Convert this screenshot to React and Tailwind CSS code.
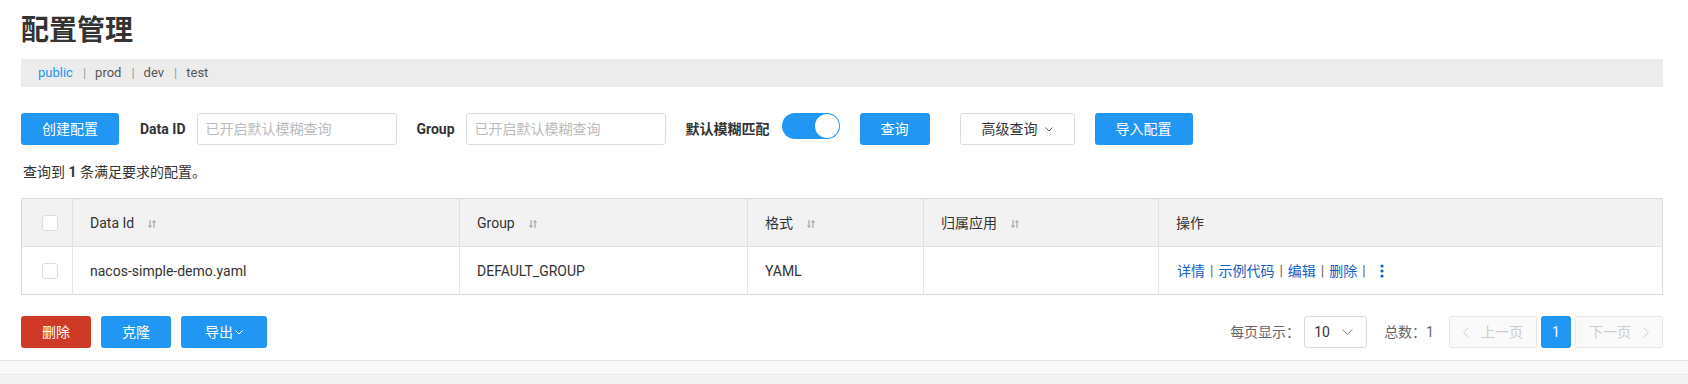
import React from "react";

const SortIcon = () => (
  <svg width="8" height="10" viewBox="0 0 8 10" className="ml-[14px] inline-block">
    <path d="M2 1v7M0.5 6.5L2 8.5 3.5 6.5" stroke="#999" strokeWidth="1" fill="none" />
    <path d="M6 9V2M4.5 3.5L6 1.5 7.5 3.5" stroke="#999" strokeWidth="1" fill="none" />
  </svg>
);

const Chevron = ({ className = "" }) => (
  <svg width="8" height="5" viewBox="0 0 8 5" className={className}>
    <path d="M0.5 0.5L4 4 7.5 0.5" stroke="currentColor" strokeWidth="1" fill="none" />
  </svg>
);

const Checkbox = () => (
  <span className="block w-4 h-4 rounded-[3px] border border-[#dcdcdc] bg-white" />
);

const BlueButton = ({ children, className = "" }) => (
  <button className={`h-8 px-[21px] rounded-[3px] bg-[#2196f3] text-white text-sm flex items-center ${className}`}>
    {children}
  </button>
);

const Input = () => (
  <input
    placeholder="已开启默认模糊查询"
    className="w-[200px] h-8 px-2 rounded-[3px] border border-[#dcdcdc] text-sm outline-none placeholder:text-[#bbb]"
  />
);

const columns = [
  { key: "dataId", label: "Data Id", width: "w-[387px]", sort: true },
  { key: "group", label: "Group", width: "w-[288px]", sort: true },
  { key: "type", label: "格式", width: "w-[176px]", sort: true },
  { key: "app", label: "归属应用", width: "w-[235px]", sort: true },
];

const row = {
  dataId: "nacos-simple-demo.yaml",
  group: "DEFAULT_GROUP",
  type: "YAML",
  app: "",
};

const actions = ["详情", "示例代码", "编辑", "删除"];

export default function App() {
  return (
    <div className="w-[1688px] h-[384px] bg-white text-[#333] font-[Roboto,'Noto_Sans_CJK_SC',sans-serif] flex flex-col overflow-hidden">
      <div className="pl-[21px] pr-[25px] flex flex-col">
        {/* Title */}
        <h1 className="pt-[11px] h-[51px] leading-[40px] text-[28px] font-bold text-[#333]">配置管理</h1>

        {/* Namespace bar */}
        <div className="mt-2 h-[28px] bg-[#ececec] pl-[17px] flex items-center text-[13px] text-[#555]">
          <span className="text-[#2196f3]">public</span>
          {["prod", "dev", "test"].map((ns) => (
            <React.Fragment key={ns}>
              <span className="ml-[10px] mr-[9px] text-[#999]">|</span>
              <span>{ns}</span>
            </React.Fragment>
          ))}
        </div>

        {/* Search bar */}
        <div className="mt-[26px] h-8 flex items-center text-sm">
          <BlueButton>创建配置</BlueButton>
          <span className="ml-[21px] mr-[11px] font-bold">Data ID</span>
          <Input />
          <span className="ml-[20px] mr-[11px] font-bold">Group</span>
          <Input />
          <span className="ml-[20px] mr-[12px] font-bold">默认模糊匹配</span>
          <span className="relative w-[58px] h-[26px] rounded-full bg-[#2196f3] self-start">
            <span className="absolute right-[1px] top-[1px] w-6 h-6 rounded-full bg-white" />
          </span>
          <BlueButton className="ml-5">查询</BlueButton>
          <button className="ml-[30px] h-8 w-[115px] pl-[21px] rounded-[3px] border border-[#dcdcdc] bg-white text-sm flex items-center">
            高级查询
            <Chevron className="ml-[7px] text-[#666]" />
          </button>
          <BlueButton className="ml-5">导入配置</BlueButton>
        </div>

        {/* Result count */}
        <p className="mt-[17px] h-5 leading-5 pl-[2px] text-sm">
          查询到 <strong>1</strong> 条满足要求的配置。
        </p>

        {/* Table */}
        <table className="mt-4 w-full border border-[#dcdcdc] border-collapse text-sm">
          <thead>
            <tr className="h-[48px] bg-[#f2f2f2]">
              <th className="w-[51px] pl-5 border-r border-[#e0e0e0] font-normal text-left">
                <Checkbox />
              </th>
              {columns.map((col) => (
                <th key={col.key} className={`${col.width} pl-[17px] border-r border-[#e0e0e0] font-normal text-left`}>
                  {col.label}
                  {col.sort && <SortIcon />}
                </th>
              ))}
              <th className="pl-[17px] font-normal text-left">操作</th>
            </tr>
          </thead>
          <tbody>
            <tr className="h-[48px] border-t border-[#e0e0e0]">
              <td className="pl-5 border-r border-[#e6e6e6]">
                <Checkbox />
              </td>
              {columns.map((col) => (
                <td key={col.key} className="pl-[17px] border-r border-[#e6e6e6]">
                  {row[col.key]}
                </td>
              ))}
              <td className="pl-[18px]">
                <span className="flex items-center text-[#0f62c4]">
                  {actions.map((a) => (
                    <React.Fragment key={a}>
                      <a>{a}</a>
                      <span className="mx-[5px] text-[#666]">|</span>
                    </React.Fragment>
                  ))}
                  <svg width="4" height="14" viewBox="0 0 4 14" className="ml-[9px]">
                    <circle cx="2" cy="2" r="1.6" fill="#0f62c4" />
                    <circle cx="2" cy="7" r="1.6" fill="#0f62c4" />
                    <circle cx="2" cy="12" r="1.6" fill="#0f62c4" />
                  </svg>
                </span>
              </td>
            </tr>
          </tbody>
        </table>

        {/* Footer actions + pagination */}
        <div className="mt-[21px] h-8 flex items-center justify-between text-sm">
          <div className="flex items-center gap-[10px]">
            <button className="h-8 w-[70px] rounded-[3px] bg-[#cf3a26] text-white">删除</button>
            <button className="h-8 w-[70px] rounded-[3px] bg-[#2196f3] text-white">克隆</button>
            <button className="h-8 w-[86px] rounded-[3px] bg-[#2196f3] text-white flex items-center justify-center">
              导出
              <Chevron className="ml-[2px] text-white" />
            </button>
          </div>
          <div className="flex items-center text-[#666]">
            <span>每页显示：</span>
            <span className="ml-1 h-8 w-[63px] pl-[9px] pr-[13px] rounded-[3px] border border-[#dcdcdc] flex items-center justify-between text-[#333]">
              10
              <svg width="11" height="6" viewBox="0 0 11 6">
                <path d="M0.5 0.5L5.5 5.5 10.5 0.5" stroke="#888" strokeWidth="1" fill="none" />
              </svg>
            </span>
            <span className="ml-[17px]">总数：1</span>
            <span className="ml-[15px] h-8 w-[88px] rounded-[3px] border border-[#e6e6e6] bg-[#fafafa] text-[#ccc] flex items-center justify-center">
              <svg width="6" height="11" viewBox="0 0 6 11" className="mr-[12px]">
                <path d="M5.5 0.5L0.5 5.5 5.5 10.5" stroke="#ccc" strokeWidth="1" fill="none" />
              </svg>
              上一页
            </span>
            <span className="ml-1 h-8 w-[30px] rounded-[3px] bg-[#2196f3] text-white flex items-center justify-center">1</span>
            <span className="ml-1 h-8 w-[88px] rounded-[3px] border border-[#e6e6e6] bg-[#fafafa] text-[#ccc] flex items-center justify-center">
              下一页
              <svg width="6" height="11" viewBox="0 0 6 11" className="ml-[12px]">
                <path d="M0.5 0.5L5.5 5.5 0.5 10.5" stroke="#ccc" strokeWidth="1" fill="none" />
              </svg>
            </span>
          </div>
        </div>
      </div>

      {/* Bottom strip */}
      <div className="mt-3 h-[14px] border-t border-[#e3e3e3] bg-[#f8f8f8]" />
      <div className="flex-1 border-t border-[#e8e8e8] bg-[#f2f2f2]" />
    </div>
  );
}
